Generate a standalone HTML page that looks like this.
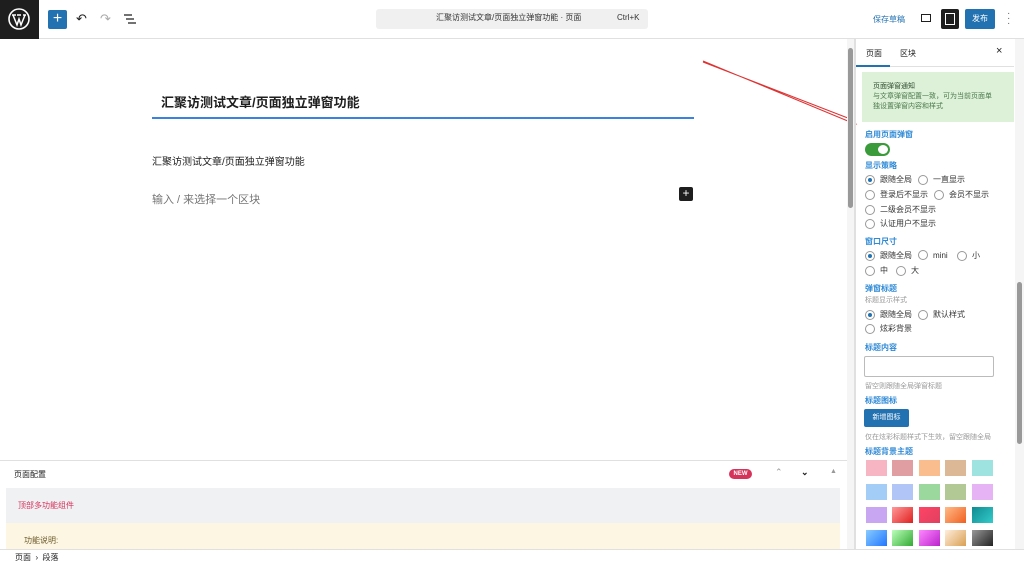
<!DOCTYPE html>
<html><head><meta charset="utf-8"><style>
*{box-sizing:border-box;margin:0;padding:0}
body{width:1024px;height:564px;overflow:hidden;background:#fff;font-family:"Liberation Sans","Noto Sans CJK SC",sans-serif;color:#1e1e1e;position:relative}
.a{position:absolute}
.lbl{position:absolute;left:865px;font-size:8px;color:#2f8ad6;font-weight:bold}
.r{position:absolute;font-size:8px;color:#333;display:flex;align-items:center}
.r i{display:inline-block;width:10px;height:10px;border:1px solid #999;border-radius:50%;margin-right:5px;position:relative}
.r i.on::after{content:"";position:absolute;left:2px;top:2px;width:4px;height:4px;border-radius:50%;background:#2271b1}
.sw{position:absolute;width:21px;height:16px}
</style></head><body>
<!-- top bar -->
<div class="a" style="left:0;top:0;width:1024px;height:39px;border-bottom:1px solid #e0e0e0"></div>
<div class="a" style="left:0;top:0;width:39px;height:39px;background:#1e1e1e"></div>
<svg class="a" style="left:8px;top:8px" width="22" height="22" viewBox="0 0 22 22"><circle cx="11" cy="11" r="10" fill="none" stroke="#fff" stroke-width="1.6"/><path d="M5 7l4 10 2-6 2 6 4-10M4 7h4M9 7h4M15 7h3" stroke="#fff" stroke-width="1.5" fill="none"/></svg>
<div class="a" style="left:48px;top:10px;width:19px;height:19px;background:#2271b1;border-radius:2px;color:#fff;font-size:16px;line-height:18px;text-align:center">+</div>
<div class="a" style="left:76px;top:11px;font-size:13px;color:#1e1e1e">↶</div>
<div class="a" style="left:100px;top:11px;font-size:13px;color:#aaa">↷</div>
<svg class="a" style="left:124px;top:14px" width="12" height="10"><path d="M0 1h8M2 5h8M4 9h8" stroke="#1e1e1e" stroke-width="1.3"/></svg>
<div class="a" style="left:376px;top:9px;width:272px;height:20px;background:#f0f0f0;border-radius:3px"></div>
<div class="a" style="left:436px;top:12px;font-size:8px;color:#333">汇聚访测试文章/页面独立弹窗功能 · 页面</div>
<div class="a" style="left:617px;top:13px;font-size:8px;color:#333">Ctrl+K</div>
<div class="a" style="left:873px;top:14px;font-size:8px;color:#2271b1">保存草稿</div>
<div class="a" style="left:921px;top:14px;width:10px;height:8px;border:1.5px solid #1e1e1e"></div>
<div class="a" style="left:941px;top:9px;width:18px;height:20px;background:#1e1e1e;border-radius:2px"></div>
<div class="a" style="left:945px;top:13px;width:10px;height:12px;border:1.5px solid #fff"></div>
<div class="a" style="left:965px;top:9px;width:30px;height:20px;background:#2271b1;border-radius:2px;color:#fff;font-size:8px;line-height:20px;text-align:center">发布</div>
<div class="a" style="left:1007px;top:11px;font-size:10px;color:#666;line-height:5px">·<br>·<br>·</div>
<!-- editor -->
<div class="a" style="left:161px;top:92px;font-size:13px;font-weight:bold">汇聚访测试文章/页面独立弹窗功能</div>
<div class="a" style="left:152px;top:117px;width:542px;height:2px;background:#3b82e0"></div>
<div class="a" style="left:152px;top:153px;font-size:10px">汇聚访测试文章/页面独立弹窗功能</div>
<div class="a" style="left:152px;top:191px;font-size:11px;color:#757575">输入 / 来选择一个区块</div>
<div class="a" style="left:679px;top:187px;width:14px;height:14px;background:#1e1e1e;border-radius:2px;color:#fff;font-size:12px;line-height:13px;text-align:center">+</div>
<svg class="a" style="left:700px;top:58px" width="160" height="72"><path d="M3 3L155 66M3 4L153 62" stroke="#d33" stroke-width="1" fill="none"/><path d="M148 60l8 6-9 1" stroke="#d33" fill="none"/></svg>
<!-- editor scrollbar -->
<div class="a" style="left:847px;top:39px;width:8px;height:510px;background:#f5f5f5;border-right:1px solid #e0e0e0"></div>
<div class="a" style="left:848px;top:48px;width:5px;height:160px;background:#999;border-radius:3px"></div>
<!-- meta box -->
<div class="a" style="left:0;top:460px;width:847px;height:1px;background:#e0e0e0"></div>
<div class="a" style="left:14px;top:469px;font-size:8px">页面配置</div>
<div class="a" style="left:729px;top:469px;width:23px;height:10px;background:#d6335b;border-radius:5px;color:#fff;font-size:6px;font-weight:bold;text-align:center;line-height:10px">NEW</div>
<div class="a" style="left:775px;top:467px;font-size:9px;color:#999">⌃</div>
<div class="a" style="left:801px;top:467px;font-size:9px;font-weight:bold">⌄</div>
<div class="a" style="left:830px;top:468px;font-size:7px;color:#999">▲</div>
<div class="a" style="left:6px;top:488px;width:834px;height:35px;background:#f0f1f3"></div>
<div class="a" style="left:18px;top:500px;font-size:8px;color:#d6335b">顶部多功能组件</div>
<div class="a" style="left:6px;top:523px;width:834px;height:26px;background:#fdf6e3"></div>
<div class="a" style="left:24px;top:535px;font-size:8px;color:#6b5a2a">功能说明:</div>
<div class="a" style="left:0;top:549px;width:1024px;height:15px;border-top:1px solid #e0e0e0;background:#fff"></div>
<div class="a" style="left:15px;top:552px;font-size:8px">页面 &nbsp;›&nbsp; 段落</div>
<!-- sidebar -->
<div class="a" style="left:855px;top:39px;width:160px;height:510px;border-left:1px solid #e0e0e0"></div>
<div class="a" style="left:866px;top:48px;font-size:8px">页面</div>
<div class="a" style="left:900px;top:48px;font-size:8px">区块</div>
<div class="a" style="left:996px;top:45px;font-size:11px">×</div>
<div class="a" style="left:856px;top:66px;width:158px;height:1px;background:#e0e0e0"></div>
<div class="a" style="left:856px;top:65px;width:34px;height:2px;background:#2271b1"></div>
<div class="a" style="left:862px;top:72px;width:152px;height:50px;background:#ddf0d8"></div>
<div class="a" style="left:873px;top:82px;font-size:7px;color:#2d4a2d;line-height:10px">页面弹窗通知<br><span style="color:#4a7a4a">与文章弹窗配置一致，可为当前页面单<br>独设置弹窗内容和样式</span></div>
<div class="lbl" style="top:129px">启用页面弹窗</div>
<div class="a" style="left:865px;top:143px;width:25px;height:13px;background:#3a9b3a;border-radius:7px"></div>
<div class="a" style="left:878px;top:145px;width:10px;height:9px;background:#fff;border-radius:50%"></div>
<div class="lbl" style="top:160px">显示策略</div>
<div class="r" style="left:865px;top:174px"><i class="on"></i>跟随全局</div>
<div class="r" style="left:918px;top:174px"><i></i>一直显示</div>
<div class="r" style="left:865px;top:189px"><i></i>登录后不显示</div>
<div class="r" style="left:934px;top:189px"><i></i>会员不显示</div>
<div class="r" style="left:865px;top:204px"><i></i>二级会员不显示</div>
<div class="r" style="left:865px;top:218px"><i></i>认证用户不显示</div>
<div class="lbl" style="top:236px">窗口尺寸</div>
<div class="r" style="left:865px;top:250px"><i class="on"></i>跟随全局</div>
<div class="r" style="left:918px;top:250px"><i></i>mini</div>
<div class="r" style="left:957px;top:250px"><i></i>小</div>
<div class="r" style="left:865px;top:265px"><i></i>中</div>
<div class="r" style="left:896px;top:265px"><i></i>大</div>
<div class="lbl" style="top:283px">弹窗标题</div>
<div class="a" style="left:865px;top:295px;font-size:7px;color:#999">标题显示样式</div>
<div class="r" style="left:865px;top:309px"><i class="on"></i>跟随全局</div>
<div class="r" style="left:918px;top:309px"><i></i>默认样式</div>
<div class="r" style="left:865px;top:323px"><i></i>炫彩背景</div>
<div class="lbl" style="top:342px">标题内容</div>
<div class="a" style="left:864px;top:356px;width:130px;height:21px;border:1px solid #bbb;border-radius:2px"></div>
<div class="a" style="left:865px;top:381px;font-size:7px;color:#999">留空则跟随全局弹窗标题</div>
<div class="lbl" style="top:395px">标题图标</div>
<div class="a" style="left:864px;top:409px;width:45px;height:18px;background:#2271b1;border-radius:2px;color:#fff;font-size:7px;line-height:18px;text-align:center">新增图标</div>
<div class="a" style="left:865px;top:432px;font-size:7px;color:#999">仅在炫彩标题样式下生效，留空跟随全局</div>
<div class="lbl" style="top:446px">标题背景主题</div>
<div class="sw" style="left:866px;top:460px;background:#f7b5c4"></div>
<div class="sw" style="left:892px;top:460px;background:#e09ea3"></div>
<div class="sw" style="left:919px;top:460px;background:#f9bd8e"></div>
<div class="sw" style="left:945px;top:460px;background:#dcb896"></div>
<div class="sw" style="left:972px;top:460px;background:#9ee3e0"></div>
<div class="sw" style="left:866px;top:484px;background:#a3cdf6"></div>
<div class="sw" style="left:892px;top:484px;background:#b1c6f7"></div>
<div class="sw" style="left:919px;top:484px;background:#9ad89e"></div>
<div class="sw" style="left:945px;top:484px;background:#b2c995"></div>
<div class="sw" style="left:972px;top:484px;background:#e6b3f5"></div>
<div class="sw" style="left:866px;top:507px;background:#c9a6f2"></div>
<div class="sw" style="left:892px;top:507px;background:linear-gradient(135deg,#f99,#e02020)"></div>
<div class="sw" style="left:919px;top:507px;background:linear-gradient(135deg,#f46,#e04060)"></div>
<div class="sw" style="left:945px;top:507px;background:linear-gradient(135deg,#fb8,#f06020)"></div>
<div class="sw" style="left:972px;top:507px;background:linear-gradient(135deg,#108a90,#3cc)"></div>
<div class="sw" style="left:866px;top:530px;background:linear-gradient(135deg,#8cf,#27f)"></div>
<div class="sw" style="left:892px;top:530px;background:linear-gradient(135deg,#bfb,#3a3)"></div>
<div class="sw" style="left:919px;top:530px;background:linear-gradient(135deg,#f8f,#b2c)"></div>
<div class="sw" style="left:945px;top:530px;background:linear-gradient(135deg,#fed,#d9a050)"></div>
<div class="sw" style="left:972px;top:530px;background:linear-gradient(135deg,#999,#222)"></div>
<!-- sidebar scrollbar -->
<div class="a" style="left:1015px;top:39px;width:9px;height:510px;background:#f5f5f5"></div>
<div class="a" style="left:1017px;top:282px;width:5px;height:162px;background:#999;border-radius:3px"></div>
</body></html>
